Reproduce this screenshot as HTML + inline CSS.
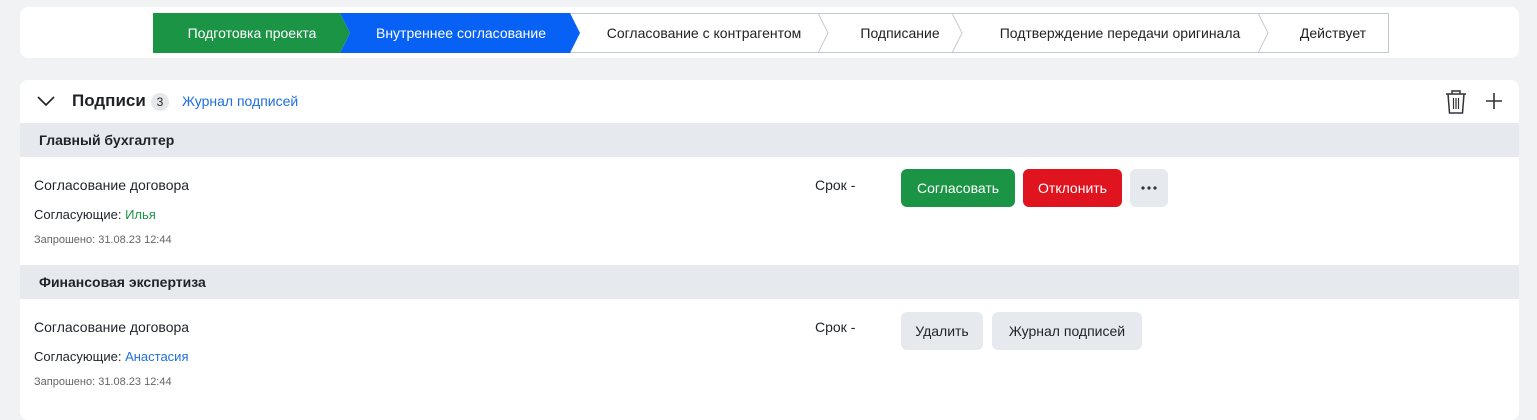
<!DOCTYPE html>
<html><head><meta charset="utf-8"><style>
*{margin:0;padding:0;box-sizing:border-box}
body{width:1537px;height:407px;overflow:hidden;background:#f0f2f4;font-family:"Liberation Sans",sans-serif;color:#1f2328;position:relative}
.a{position:absolute;white-space:nowrap}
.card{position:absolute;background:#fff;border-radius:8px}
.gh{position:absolute;left:20px;width:1499px;height:34px;background:#e6eaef;font-weight:bold;font-size:14px;padding:9px 0 0 19px}
.btn{position:absolute;height:38px;border-radius:6px;font-size:14px;text-align:center;line-height:38px}
</style></head><body>
<div class="card" style="left:20px;top:7px;width:1499px;height:51px"></div>
<svg class="a" style="left:153px;top:13px" width="1236" height="41" viewBox="0 0 1236 41">
<rect x="0.5" y="0.5" width="1235" height="39" fill="#fff" stroke="#c6cad0"/>
<polygon points="0,0 187,0 197,20 187,40 0,40" fill="#1b9445"/>
<polygon points="187,0 417,0 427,20 417,40 187,40 197,20" fill="#0761f5"/>
<polyline points="665,0 675,20 665,40" fill="none" stroke="#c6cad0"/>
<polyline points="799,0 809,20 799,40" fill="none" stroke="#c6cad0"/>
<polyline points="1105,0 1115,20 1105,40" fill="none" stroke="#c6cad0"/>
<g font-family="Liberation Sans,sans-serif" font-size="14" text-anchor="middle">
<text x="99" y="25" fill="#fff">Подготовка проекта</text>
<text x="308" y="25" fill="#fff">Внутреннее согласование</text>
<text x="551" y="25" fill="#222">Согласование с контрагентом</text>
<text x="747" y="25" fill="#222">Подписание</text>
<text x="967" y="25" fill="#222">Подтверждение передачи оригинала</text>
<text x="1180" y="25" fill="#222">Действует</text>
</g></svg>

<div class="card" style="left:20px;top:80px;width:1499px;height:340px"></div>
<svg class="a" style="left:37px;top:95px" width="18" height="12"><polyline points="1,2 9,10 17,2" fill="none" stroke="#222" stroke-width="1.6"/></svg>
<div class="a" style="left:72px;top:91px;font-size:17px;font-weight:bold">Подписи</div>
<div class="a" style="left:151px;top:93px;width:18px;height:18px;border-radius:9px;background:#e6e8eb;font-size:12px;text-align:center;line-height:18px">3</div>
<div class="a" style="left:182px;top:93px;font-size:14px;color:#1f6fe0">Журнал подписей</div>
<svg class="a" style="left:1444px;top:89px" width="24" height="26" viewBox="0 0 24 26"><path d="M2 5h20M8 5V2h8v3M4 5l1.5 19h13L20 5" fill="none" stroke="#333" stroke-width="1.5"/><path d="M9.5 9v11M12 9v11M14.5 9v11" fill="none" stroke="#333" stroke-width="1.2"/></svg>
<svg class="a" style="left:1485px;top:92px" width="18" height="18"><path d="M9 1v16M1 9h16" stroke="#333" stroke-width="1.6"/></svg>

<div class="gh" style="top:123px">Главный бухгалтер</div>
<div class="a" style="left:34px;top:177px;font-size:14px">Согласование договора</div>
<div class="a" style="left:34px;top:207px;font-size:13px">Согласующие: <span style="color:#1b9445">Илья</span></div>
<div class="a" style="left:34px;top:234px;font-size:11px;color:#666">Запрошено: 31.08.23 12:44</div>
<div class="a" style="left:815px;top:177px;font-size:14px">Срок -</div>
<div class="btn" style="left:901px;top:169px;width:114px;background:#1b9445;color:#fff">Согласовать</div>
<div class="btn" style="left:1023px;top:169px;width:99px;background:#e0141f;color:#fff">Отклонить</div>
<div class="btn" style="left:1130px;top:169px;width:38px;background:#e6eaef">
<svg style="position:absolute;left:11px;top:17px" width="16" height="4"><circle cx="2" cy="2" r="1.6" fill="#333"/><circle cx="8" cy="2" r="1.6" fill="#333"/><circle cx="14" cy="2" r="1.6" fill="#333"/></svg></div>

<div class="gh" style="top:265px">Финансовая экспертиза</div>
<div class="a" style="left:34px;top:319px;font-size:14px">Согласование договора</div>
<div class="a" style="left:34px;top:349px;font-size:13px">Согласующие: <span style="color:#1f6fe0">Анастасия</span></div>
<div class="a" style="left:34px;top:376px;font-size:11px;color:#666">Запрошено: 31.08.23 12:44</div>
<div class="a" style="left:815px;top:319px;font-size:14px">Срок -</div>
<div class="btn" style="left:901px;top:312px;width:82px;background:#e6eaef">Удалить</div>
<div class="btn" style="left:992px;top:312px;width:150px;background:#e6eaef">Журнал подписей</div>
</body></html>
